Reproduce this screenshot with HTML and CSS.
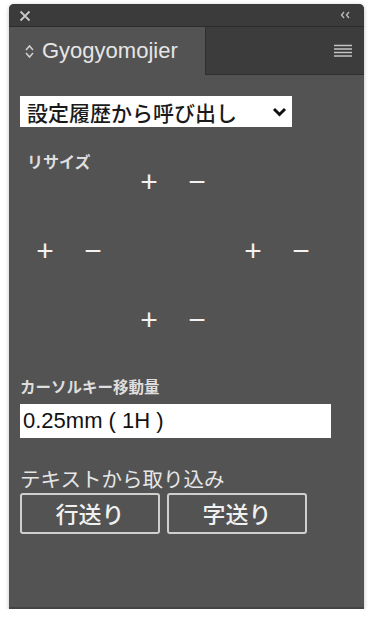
FILE: index.html
```html
<!DOCTYPE html>
<html lang="ja">
  <head>
    <meta charset="UTF-8" />
    <meta name="viewport" content="width=device-width, initial-scale=1.0" />
    <title>Gyogyomojier</title>
    <link rel="stylesheet" href="styles.css">
  </head>
  <body>
    <div class="panel">
      <div class="titlebar">
        <svg class="close-icon" width="12" height="12" viewBox="0 0 12 12">
          <path d="M1.5 1.5 L10.5 10.5 M10.5 1.5 L1.5 10.5" stroke="#c8c8c8" stroke-width="1.8" fill="none" />
        </svg>
        <svg class="collapse-icon" width="11" height="8" viewBox="0 0 11 8">
          <path d="M4 1 L1.5 4 L4 7 M9 1 L6.5 4 L9 7" stroke="#b8b8b8" stroke-width="1.4" fill="none" />
        </svg>
      </div>

      <div class="tabs">
        <div class="tab active">
          <svg class="updown" width="9" height="15" viewBox="0 0 9 15">
            <path d="M1 6 L4.5 2 L8 6 M1 9 L4.5 13 L8 9" stroke="#d0d0d0" stroke-width="1.5" fill="none" />
          </svg>
          <span class="tab-title">Gyogyomojier</span>
        </div>
        <div class="tab-rest">
          <svg class="menu-icon" width="18" height="14" viewBox="0 0 18 14">
            <path d="M0 1.5 H18 M0 5 H18 M0 8.5 H18 M0 12 H18" stroke="#c4c4c4" stroke-width="1.6" fill="none" />
          </svg>
        </div>
      </div>

      <div class="content">
        <div class="history-select">
          <span>設定履歴から呼び出し</span>
          <svg width="15" height="10" viewBox="0 0 15 10">
            <path d="M2 2 L7.5 7.5 L13 2" stroke="#111" stroke-width="3" fill="none" />
          </svg>
        </div>

        <div class="resize">
          <div class="resize-label">リサイズ</div>
          <div class="pair top"><button>+</button><button>−</button></div>
          <div class="pair left"><button>+</button><button>−</button></div>
          <div class="pair right"><button>+</button><button>−</button></div>
          <div class="pair bottom"><button>+</button><button>−</button></div>
        </div>

        <div class="small-label">カーソルキー移動量</div>
        <div class="amount">0.25mm ( 1H )</div>

        <div class="big-label">テキストから取り込み</div>
        <div class="import-row">
          <button class="import-btn">行送り</button>
          <button class="import-btn">字送り</button>
        </div>
      </div>
    </div>
  </body>
</html>
```

FILE: styles.css
```css
body {
  margin: 0;
  padding: 4px 0 0 9px;
  background-color: #fff;
  font-family: "Liberation Sans", "Noto Sans CJK JP", sans-serif;
}

.panel {
  width: 355px;
  height: 603px;
  background-color: #535353;
  border-radius: 5px 5px 0 0;
  border-bottom: 2px solid #444;
  box-shadow: 0 1px 4px rgba(0, 0, 0, 0.25);
  display: flex;
  flex-direction: column;
  overflow: hidden;
}

.titlebar {
  height: 22px;
  background-color: #3b3b3b;
  border-bottom: 1px solid #2c2c2c;
  display: flex;
  align-items: center;
  justify-content: space-between;
  padding: 0 13px 0 10px;
}

.close-icon {
  margin-top: 1px;
}

.tabs {
  height: 48px;
  display: flex;
  background-color: #3c3c3c;
}

.tab.active {
  width: 197px;
  background-color: #535353;
  display: flex;
  align-items: center;
  padding-left: 16px;
  box-sizing: border-box;
  border-right: 1px solid #2f2f2f;
}

.updown {
  margin-right: 8px;
  margin-top: 1px;
}

.tab-title {
  color: #e6e6e6;
  font-size: 22px;
}

.tab-rest {
  flex: 1;
  display: flex;
  align-items: center;
  justify-content: flex-end;
  padding-right: 12px;
  border-bottom: 1px solid #2f2f2f;
}

.content {
  padding: 21px 0 0 11px;
  display: flex;
  flex-direction: column;
  align-items: flex-start;
}

.history-select {
  width: 272px;
  height: 31px;
  box-sizing: border-box;
  background-color: #fff;
  display: flex;
  align-items: center;
  justify-content: space-between;
  padding: 0 5px 0 7px;
  font-family: "Noto Sans CJK JP", sans-serif;
  font-size: 21px;
  font-weight: 500;
  color: #1a1a1a;
}

.resize {
  margin: 20px 0 0 -3px;
  display: grid;
  grid-template-columns: repeat(3, 104px);
  grid-template-rows: repeat(3, 69px);
}

.resize-label {
  grid-column: 1;
  grid-row: 1;
  align-self: start;
  padding: 2px 0 0 10px;
  font-family: "Noto Sans CJK JP", sans-serif;
  font-size: 16px;
  font-weight: bold;
  color: #dedede;
  white-space: nowrap;
}

.pair {
  display: flex;
  justify-content: center;
  align-items: center;
  gap: 30px;
}

.pair.top { grid-column: 2; grid-row: 1; }
.pair.left { grid-column: 1; grid-row: 2; }
.pair.right { grid-column: 3; grid-row: 2; }
.pair.bottom { grid-column: 2; grid-row: 3; }

.pair button {
  background: none;
  border: none;
  padding: 0;
  width: 18px;
  color: #f2f2f2;
  font-family: "Liberation Sans", sans-serif;
  font-size: 30px;
  line-height: 30px;
  cursor: pointer;
}

.small-label {
  margin-top: 21px;
  font-family: "Noto Sans CJK JP", sans-serif;
  font-size: 15.5px;
  font-weight: bold;
  color: #dedede;
  line-height: 22px;
}

.amount {
  margin-top: 7px;
  width: 311px;
  height: 34px;
  box-sizing: border-box;
  background-color: #fff;
  padding: 0 0 0 3px;
  display: flex;
  align-items: center;
  font-size: 22px;
  color: #111;
}

.big-label {
  margin-top: 26px;
  font-family: "Noto Sans CJK JP", sans-serif;
  font-size: 20.5px;
  line-height: 28px;
  color: #e6e6e6;
}

.import-row {
  margin-top: 1px;
  display: flex;
  gap: 7px;
}

.import-btn {
  width: 140px;
  height: 41px;
  background-color: #535353;
  border: 2px solid #cfcfcf;
  border-radius: 3px;
  color: #f0f0f0;
  font-family: "Noto Sans CJK JP", sans-serif;
  font-size: 23px;
  font-weight: 500;
  line-height: 1;
  cursor: pointer;
}
```
